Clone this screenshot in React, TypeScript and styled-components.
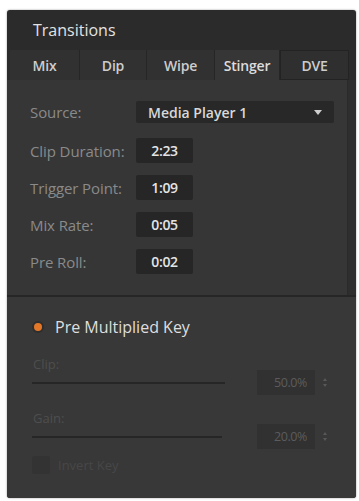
import React from "react";
import styled, { createGlobalStyle } from "styled-components";

const Global = createGlobalStyle`
  html, body { margin: 0; padding: 0; background: #ffffff; }
  body { font-family: "Open Sans", "Noto Sans", sans-serif; }
  * { box-sizing: border-box; }
`;

const Page = styled.div`
  width: 359px;
  height: 501px;
  padding: 10px 3px 3px 7px;
  background: #ffffff;
`;

const Panel = styled.div`
  width: 349px;
  height: 488px;
  background: #2b2b2b;
  border-radius: 3px;
  box-shadow: 0 0 2px rgba(0, 0, 0, 0.45);
  display: flex;
  flex-direction: column;
  overflow: hidden;
`;

const Title = styled.div`
  height: 40px;
  padding-left: 26px;
  display: flex;
  align-items: center;
  font-size: 16px;
  color: #e2e2e2;
`;

const Tabs = styled.div`
  margin: 0 7px 0 3px;
  display: flex;
  height: 30px;
  background: #303030;
`;

const Tab = styled.div<{ $w: number; $active?: boolean }>`
  width: ${(p) => p.$w}px;
  display: flex;
  align-items: center;
  justify-content: center;
  font-size: 14px;
  font-weight: 600;
  letter-spacing: -0.2px;
  color: ${(p) => (p.$active ? "#dcdcdc" : "#cdcdcd")};
  background: ${(p) => (p.$active ? "#363636" : "#313131")};
  border-right: 1px solid #262626;
  &:last-child { border-right: none; border: 1px solid #232323; background: #2f2f2f; }
`;

const Body = styled.div`
  display: flex;
  background: #2e2e2e;
`;

const Content = styled.div`
  width: 341px;
  background: #363636;
  border-right: 1px solid #2a2a2a;
  padding: 21px 0 21px 23px;
  display: flex;
  flex-direction: column;
  gap: 12px;
`;

const Row = styled.div<{ $extra?: number }>`
  display: flex;
  align-items: center;
  margin-bottom: ${(p) => p.$extra ?? 0}px;
`;

const Label = styled.div`
  width: 106px;
  font-size: 15px;
  color: #8a8a8a;
  white-space: nowrap;
  letter-spacing: -0.1px;
`;

const Select = styled.div`
  width: 198px;
  height: 22px;
  background: #282828;
  border-radius: 2px;
  display: flex;
  align-items: center;
  justify-content: space-between;
  padding: 0 12px 0 12px;
  font-size: 14px;
  font-weight: 600;
  color: #d8d8d8;
`;

const Caret = styled.span`
  width: 0;
  height: 0;
  border-left: 4px solid transparent;
  border-right: 4px solid transparent;
  border-top: 5px solid #cfcfcf;
`;

const ValueBox = styled.div`
  width: 57px;
  height: 25px;
  background: #262626;
  border-radius: 2px;
  display: flex;
  align-items: center;
  justify-content: center;
  font-size: 14px;
  font-weight: 600;
  color: #e4e4e4;
  letter-spacing: -0.3px;
`;

const Lower = styled.div`
  flex: 1;
  background: #383838;
  border-top: 2px solid #262626;
  padding: 20px 0 0 25px;
  display: flex;
  flex-direction: column;
`;

const KeyRow = styled.div`
  display: flex;
  align-items: center;
  gap: 11px;
  height: 20px;
  margin-bottom: 19px;
`;

const Radio = styled.span`
  width: 12px;
  height: 12px;
  border-radius: 50%;
  background: #2e2e2e;
  display: flex;
  align-items: center;
  justify-content: center;
  &::after {
    content: "";
    width: 8px;
    height: 8px;
    border-radius: 50%;
    background: #e2772a;
  }
`;

const KeyText = styled.span`
  font-size: 16px;
  color: #dedede;
`;

const SliderGroup = styled.div`
  display: flex;
  flex-direction: column;
  margin-bottom: 15px;
`;

const DimLabel = styled.div`
  height: 16px;
  line-height: 16px;
  font-size: 13px;
  color: #4e4e4e;
  padding-left: 1px;
`;

const ControlRow = styled.div`
  display: flex;
  align-items: center;
  height: 25px;
  margin-top: -2px;
`;

const Track = styled.div<{ $w: number }>`
  width: ${(p) => p.$w}px;
  height: 2px;
  background: #262626;
`;

const Right = styled.div`
  display: flex;
  align-items: center;
  gap: 8px;
  margin-left: auto;
  margin-right: 29px;
`;

const PctBox = styled.div`
  width: 58px;
  height: 25px;
  background: #313131;
  display: flex;
  align-items: center;
  justify-content: flex-end;
  padding-right: 8px;
  font-size: 12.5px;
  color: #5c5c5c;
  letter-spacing: -0.4px;
`;

const Spinner = styled.div`
  display: flex;
  flex-direction: column;
  gap: 3px;
  align-items: center;
  &::before, &::after {
    content: "";
    width: 0;
    height: 0;
    border-left: 2px solid transparent;
    border-right: 2px solid transparent;
  }
  &::before { border-bottom: 3px solid #585858; }
  &::after { border-top: 3px solid #585858; }
`;

const InvertRow = styled.div`
  display: flex;
  align-items: center;
  gap: 8px;
  margin-top: -8px;
`;

const Check = styled.span`
  width: 18px;
  height: 18px;
  background: #333333;
  border-radius: 2px;
`;

const InvertText = styled.span`
  font-size: 13px;
  color: #474747;
`;

const tabs = [
  { n: "Mix", w: 70 },
  { n: "Dip", w: 67 },
  { n: "Wipe", w: 68 },
  { n: "Stinger", w: 65 },
  { n: "DVE", w: 69 },
];

const rows = [
  { l: "Clip Duration:", v: "2:23" },
  { l: "Trigger Point:", v: "1:09" },
  { l: "Mix Rate:", v: "0:05" },
  { l: "Pre Roll:", v: "0:02" },
];

const sliders = [
  { l: "Clip:", w: 193, v: "50.0%" },
  { l: "Gain:", w: 190, v: "20.0%" },
];

export default function App() {
  return (
    <>
      <Global />
      <Page>
        <Panel>
          <Title>Transitions</Title>
          <Tabs>
            {tabs.map((t) => (
              <Tab key={t.n} $w={t.w} $active={t.n === "Stinger"}>
                {t.n}
              </Tab>
            ))}
          </Tabs>
          <Body>
            <Content>
              <Row $extra={3}>
                <Label>Source:</Label>
                <Select>
                  <span>Media Player 1</span>
                  <Caret />
                </Select>
              </Row>
              {rows.map((r) => (
                <Row key={r.l}>
                  <Label>{r.l}</Label>
                  <ValueBox>{r.v}</ValueBox>
                </Row>
              ))}
            </Content>
          </Body>
          <Lower>
            <KeyRow>
              <Radio />
              <KeyText>Pre Multiplied Key</KeyText>
            </KeyRow>
            {sliders.map((s) => (
              <SliderGroup key={s.l}>
                <DimLabel>{s.l}</DimLabel>
                <ControlRow>
                  <Track $w={s.w} />
                  <Right>
                    <PctBox>{s.v}</PctBox>
                    <Spinner />
                  </Right>
                </ControlRow>
              </SliderGroup>
            ))}
            <InvertRow>
              <Check />
              <InvertText>Invert Key</InvertText>
            </InvertRow>
          </Lower>
        </Panel>
      </Page>
    </>
  );
}
